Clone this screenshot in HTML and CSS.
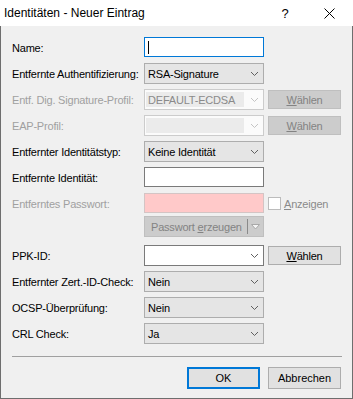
FILE: index.html
```html
<!DOCTYPE html>
<html lang="de">
<head>
<meta charset="utf-8">
<title>Identitäten - Neuer Eintrag</title>
<link rel="stylesheet" href="styles.css">
</head>
<body>
<div class="window">
  <div class="titlebar">
    <span class="title">Identitäten - Neuer Eintrag</span>
    <span class="help">?</span>
    <span class="close"><svg width="11" height="11" viewBox="0 0 11 11"><path d="M0.5 0.5 L10.5 10.5 M10.5 0.5 L0.5 10.5" stroke="#000" stroke-width="1"/></svg></span>
  </div>
  <div class="content">
    <div class="form">
      <div class="lbl">Name:</div>
      <div class="input focus"><span class="caret"></span></div>

      <div class="lbl">Entfernte Authentifizierung:</div>
      <div class="combo"><span>RSA-Signature</span><svg class="chev" width="7" height="4" viewBox="0 0 7 4"><path d="M0 0 L3.5 3.5 L7 0" fill="none" stroke="#606060"/></svg></div>

      <div class="lbl dis">Entf. Dig. Signature-Profil:</div>
      <div class="combo disabled"><span class="inner">DEFAULT-ECDSA</span><svg class="chev" width="7" height="4" viewBox="0 0 7 4"><path d="M0 0 L3.5 3.5 L7 0" fill="none" stroke="#c4c4c4"/></svg></div>
      <div class="btn small disabled"><u>W</u>ählen</div>

      <div class="lbl dis">EAP-Profil:</div>
      <div class="combo disabled"><span class="inner"></span><svg class="chev" width="7" height="4" viewBox="0 0 7 4"><path d="M0 0 L3.5 3.5 L7 0" fill="none" stroke="#c4c4c4"/></svg></div>
      <div class="btn small disabled"><u>W</u>ählen</div>

      <div class="lbl">Entfernter Identitätstyp:</div>
      <div class="combo"><span>Keine Identität</span><svg class="chev" width="7" height="4" viewBox="0 0 7 4"><path d="M0 0 L3.5 3.5 L7 0" fill="none" stroke="#606060"/></svg></div>

      <div class="lbl">Entfernte Identität:</div>
      <div class="input"></div>

      <div class="lbl dis">Entferntes Passwort:</div>
      <div class="input pink"></div>
      <div class="check"><span class="box"></span><span class="clbl"><u>A</u>nzeigen</span></div>

      <div class="split disabled"><span class="stext">Passwort <u>e</u>rzeugen</span><span class="sdiv"></span><svg class="sarrow" width="9" height="6" viewBox="0 0 9 6"><path d="M0.5 0.5 L8.5 0.5 L4.5 5 Z" fill="#f4f4f4" stroke="#a8a8a8" stroke-width="1"/></svg></div>

      <div class="lbl">PPK-ID:</div>
      <div class="combo white"><span></span><svg class="chev" width="7" height="4" viewBox="0 0 7 4"><path d="M0 0 L3.5 3.5 L7 0" fill="none" stroke="#606060"/></svg></div>
      <div class="btn small"><u>W</u>ählen</div>

      <div class="lbl">Entfernter Zert.-ID-Check:</div>
      <div class="combo"><span>Nein</span><svg class="chev" width="7" height="4" viewBox="0 0 7 4"><path d="M0 0 L3.5 3.5 L7 0" fill="none" stroke="#606060"/></svg></div>

      <div class="lbl">OCSP-Überprüfung:</div>
      <div class="combo"><span>Nein</span><svg class="chev" width="7" height="4" viewBox="0 0 7 4"><path d="M0 0 L3.5 3.5 L7 0" fill="none" stroke="#606060"/></svg></div>

      <div class="lbl">CRL Check:</div>
      <div class="combo"><span>Ja</span><svg class="chev" width="7" height="4" viewBox="0 0 7 4"><path d="M0 0 L3.5 3.5 L7 0" fill="none" stroke="#606060"/></svg></div>
    </div>
    <div class="sep"></div>
    <div class="actions">
      <div class="btn big default">OK</div>
      <div class="btn big">Abbrechen</div>
    </div>
  </div>
</div>
</body>
</html>
```

FILE: styles.css
```css
* { box-sizing: border-box; }
html, body { margin: 0; padding: 0; }
body {
  width: 353px;
  height: 399px;
  overflow: hidden;
  background: #f0f0f0;
  font-family: "Liberation Sans", Arial, sans-serif;
  font-size: 11px;
  color: #000;
}
.window { width: 353px; height: 399px; display: flex; flex-direction: column; }
.titlebar {
  height: 26px;
  background: #fff;
  display: flex;
  align-items: center;
  padding-left: 4px;
  flex: none;
}
.title { font-size: 12px; flex: 1; color: #000; }
.help { font-size: 13px; width: 14px; margin-right: 32px; text-align: center; }
.close { width: 11px; height: 11px; margin-right: 18px; display: flex; }
.content {
  flex: 1;
  border-left: 1px solid #6e6e6e;
  border-right: 1px solid #6e6e6e;
  border-bottom: 1px solid #6e6e6e;
  padding: 11px 0 0 11px;
  display: flex;
  flex-direction: column;
}
.form {
  display: grid;
  grid-template-columns: 128px 120px 73px;
  grid-auto-rows: 21px;
  column-gap: 4px;
  row-gap: 5px;
  letter-spacing: -0.2px;
}
.lbl {
  grid-column: 1;
  display: flex;
  align-items: center;
  white-space: nowrap;
}
.lbl.dis { color: #a0a0a0; }
.input, .combo, .split { grid-column: 2; }
.btn.small, .check { grid-column: 3; }
.input {
  height: 20px;
  background: #fff;
  border: 1px solid #7a7a7a;
  display: flex;
  align-items: center;
  padding-left: 3px;
}
.input.focus { border-color: #0078d7; }
.caret { width: 1px; height: 13px; background: #000; }
.input.pink { background: #ffc9c9; border-color: #d4c4c4; }
.combo {
  height: 21px;
  border: 1px solid #adadad;
  background: #e5e5e5;
  display: flex;
  align-items: center;
  justify-content: space-between;
  padding: 0 5px 0 3px;
}
.combo.white { background: #fff; border-color: #7a7a7a; }
.combo.disabled {
  border-color: #cccccc;
  background: #fbfbfb;
  padding: 2px 5px 2px 1px;
  color: #8a8a8a;
}
.combo.disabled .inner {
  width: 98px;
  height: 100%;
  background: #ebebeb;
  display: flex;
  align-items: center;
  padding-left: 2px;
}
.chev { flex: none; }
.btn {
  display: flex;
  align-items: center;
  justify-content: center;
  background: #e1e1e1;
  border: 1px solid #adadad;
}
.btn.small { height: 19px; align-self: center; }
.btn.disabled { background: #cccccc; border-color: #bfbfbf; color: #838383; }
.check { display: flex; align-items: center; padding-left: 0; }
.box { width: 13px; height: 13px; background: #fff; border: 1px solid #bcbcbc; margin-right: 3px; flex: none; }
.clbl { color: #8a8a8a; }
.split {
  margin-top: -3px;
  height: 21px;
  background: #cccccc;
  border: 1px solid #bfbfbf;
  color: #838383;
  display: flex;
  align-items: center;
  padding-left: 6px;
}
.stext { flex: 1; }
.sdiv { width: 1px; height: 15px; background: #8a8a8a; margin-right: 3px; }
.sarrow { margin-right: 3px; }
.sep {
  margin-top: 12px;
  width: 330px;
  height: 1px;
  background: #a0a0a0;
}
.actions {
  margin-top: 10px;
  display: flex;
  justify-content: flex-end;
  gap: 8px;
  padding-right: 11px;
}
.btn.big { width: 73px; height: 22px; }
.btn.default { border-color: #0078d7; box-shadow: inset 0 0 0 1px #0078d7; }
```
